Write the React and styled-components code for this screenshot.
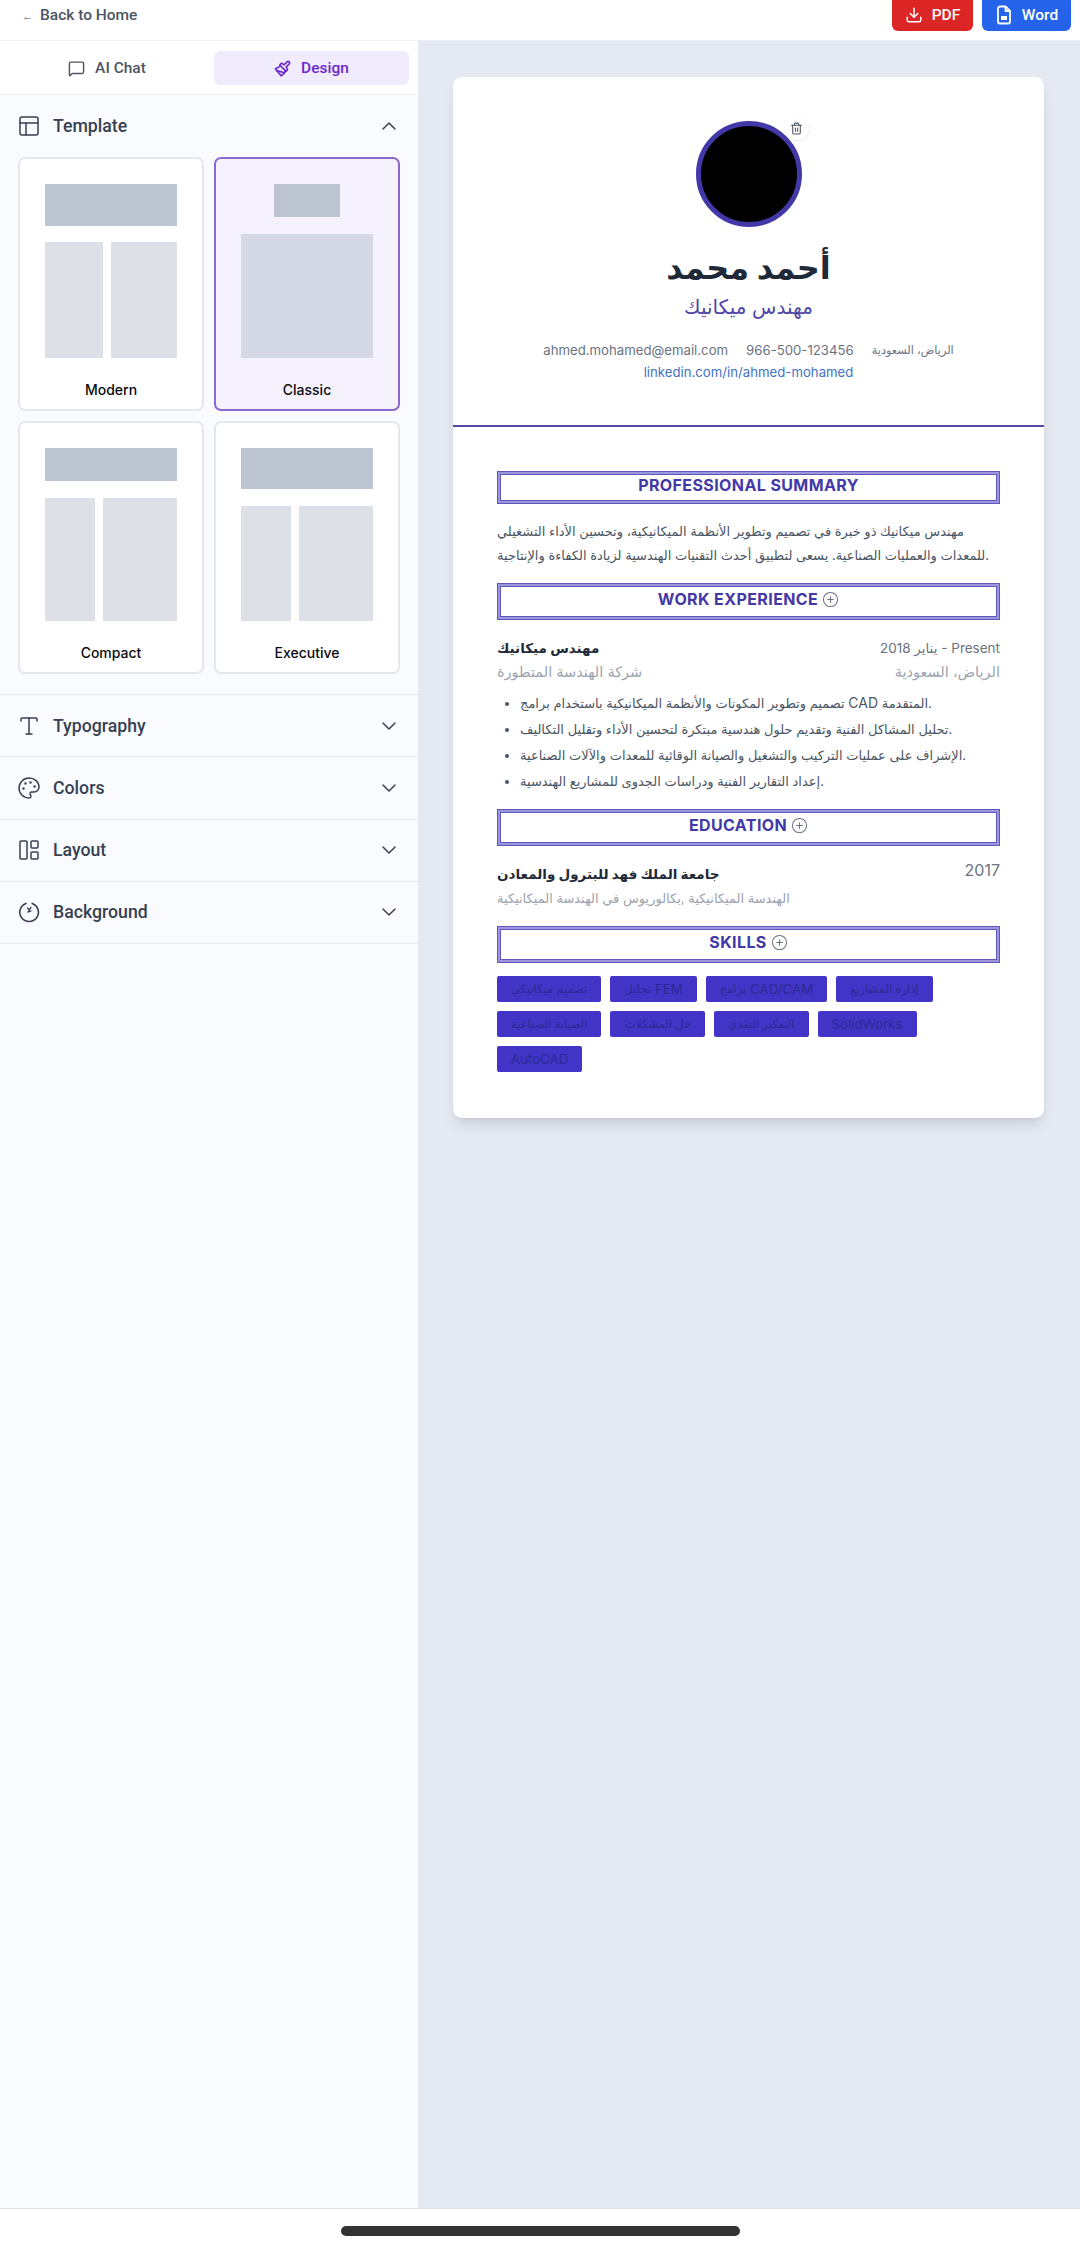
import React from "react";
import styled, { createGlobalStyle } from "styled-components";
import {
  ChevronDown,
  ChevronUp,
  CirclePlus,
  Download,
  LayoutPanelLeft,
  MessageSquare,
  Paintbrush,
  Palette,
  PanelsTopLeft,
  Trash2,
  Type,
} from "lucide-react";

const Global = createGlobalStyle`
  html, body { margin: 0; padding: 0; background: #fff; }
  * { box-sizing: border-box; }
  body { font-family: Inter, "DejaVu Sans", sans-serif; }
`;

const Page = styled.div`
  width: 1080px;
  height: 2252px;
  display: flex;
  flex-direction: column;
  overflow: hidden;
`;

const TopBar = styled.header`
  height: 41px;
  flex: none;
  display: flex;
  align-items: flex-end;
  justify-content: space-between;
  padding: 0 9px 9px 22px;
  background: #fff;
  border-bottom: 1px solid #eef0f4;
`;

const BackLink = styled.a`
  align-self: center;
  margin-bottom: 2px;
  font-family: Roboto, sans-serif;
  font-weight: 500;
  font-size: 15.5px;
  color: #4b5563;
  text-decoration: none;
  span { margin-right: 7px; font-size: 11px; }
`;

const Actions = styled.div`
  display: flex;
  gap: 9px;
`;

const ExportButton = styled.button`
  height: 40px;
  width: ${(p) => p.$width}px;
  display: flex;
  align-items: center;
  justify-content: center;
  gap: 9px;
  padding: 8px 0 0;
  border: 0;
  border-radius: 6px;
  background: ${(p) => p.$bg};
  color: #fff;
  font-family: Roboto, sans-serif;
  font-weight: 500;
  font-size: 15.5px;
  margin-top: -8px;
`;

const Main = styled.div`
  flex: 1;
  display: flex;
  min-height: 0;
  border-bottom: 1px solid #dfe2e6;
`;

const Sidebar = styled.aside`
  width: 418px;
  flex: none;
  background: #fafbfe;
`;

const Tabs = styled.div`
  height: 54px;
  display: grid;
  grid-template-columns: 196px 195px;
  gap: 9px;
  padding: 10px 9px 9px;
  background: #fff;
  border-bottom: 1px solid #eff1f5;
`;

const Tab = styled.button`
  display: flex;
  align-items: center;
  justify-content: center;
  gap: 10px;
  border: 0;
  border-radius: 6px;
  background: ${(p) => (p.$active ? "#f0ebfd" : "transparent")};
  color: ${(p) => (p.$active ? "#6d28c9" : "#4b5563")};
  font-family: Roboto, sans-serif;
  font-weight: 500;
  font-size: 15.5px;
`;

const SectionRow = styled.div`
  height: ${(p) => p.$height || 62}px;
  display: flex;
  align-items: center;
  padding: 0 17px;
  color: #374151;
  border-bottom: ${(p) => (p.$open ? "none" : "1px solid #e8eaef")};
`;

const RowLabel = styled.span`
  flex: 1;
  margin-left: 12px;
  font-family: Roboto, sans-serif;
  font-weight: 500;
  font-size: 17.7px;
`;

const TemplateBlock = styled.div`
  padding: 0 18px 20px;
  border-bottom: 1px solid #e8eaef;
`;

const TemplateGrid = styled.div`
  display: grid;
  grid-template-columns: 186px 186px;
  grid-auto-rows: auto;
  gap: 10px;
`;

const TemplateCard = styled.div`
  height: ${(p) => p.$height}px;
  display: flex;
  flex-direction: column;
  align-items: center;
  padding: 25px 25px 0;
  border: 2px solid ${(p) => (p.$active ? "#8b67cf" : "#e5e7eb")};
  border-radius: 7px;
  background: ${(p) => (p.$active ? "#f5f2fe" : "#fff")};
`;

const Thumb = styled.div`
  width: 132px;
  height: ${(p) => p.$height}px;
  display: flex;
  flex-direction: column;
  align-items: center;
  gap: ${(p) => p.$gap}px;
  flex: none;
`;

const ThumbHead = styled.div`
  width: ${(p) => p.$width || 132}px;
  height: ${(p) => p.$height}px;
  flex: none;
  background: #bdc5d2;
`;

const ThumbColumns = styled.div`
  width: 100%;
  flex: 1;
  display: grid;
  grid-template-columns: ${(p) => p.$left}px ${(p) => p.$right}px;
  gap: 8px;
`;

const ThumbColumn = styled.div`
  background: #dde1e7;
`;

const ThumbBody = styled.div`
  width: 132px;
  flex: 1;
  background: #d5d9e5;
`;

const CardLabel = styled.div`
  margin-top: auto;
  padding-bottom: 9px;
  color: #0b0b0f;
  font-family: Inter, sans-serif;
  font-weight: 500;
  font-size: 14px;
  line-height: 20px;
`;

const Preview = styled.main`
  flex: 1;
  padding: 36px 35px;
  background: #e5e9f2;
`;

const Paper = styled.div`
  width: 591px;
  background: #fff;
  border-radius: 9px;
  box-shadow: 0 10px 15px -3px rgba(0, 0, 0, 0.1), 0 4px 6px -4px rgba(0, 0, 0, 0.1);
`;

const PaperHead = styled.div`
  height: 350px;
  padding-top: 44px;
  display: flex;
  flex-direction: column;
  align-items: center;
  border-bottom: 2px solid #534aa3;
`;

const AvatarWrap = styled.div`
  position: relative;
  width: 106px;
  height: 106px;
  flex: none;
`;

const Avatar = styled.div`
  width: 100%;
  height: 100%;
  border-radius: 50%;
  background: #000;
  border: 5px solid #4338a8;
`;

const RemovePhoto = styled.button`
  position: absolute;
  top: -5px;
  right: -7px;
  width: 24px;
  height: 24px;
  display: flex;
  align-items: center;
  justify-content: center;
  padding: 0;
  border: 0;
  border-radius: 50%;
  background: #fff;
  color: #4b5563;
  box-shadow: 0 1px 3px rgba(0, 0, 0, 0.1);
`;

const Name = styled.h1`
  margin: 16px 0 0;
  font-size: 32px;
  line-height: 50px;
  font-weight: 700;
  color: #1f2937;
`;

const Role = styled.div`
  font-size: 20px;
  line-height: 28px;
  color: #4f46a8;
`;

const ContactRow = styled.div`
  margin-top: 18px;
  display: flex;
  gap: 18px;
  font-size: 13.2px;
  line-height: 22px;
  color: #6b7280;
`;

const ContactPlace = styled.span`
  font-size: 11.3px;
`;

const ContactLink = styled.a`
  font-size: 13.2px;
  line-height: 22px;
  color: #3f72c4;
  text-decoration: none;
`;

const PaperBody = styled.div`
  padding: 44px 44px 46px;
`;

const SectionBox = styled.div`
  margin-top: ${(p) => p.$top || 0}px;
  padding: 1px 0 6px;
  display: flex;
  align-items: center;
  justify-content: center;
  gap: 4px;
  border: 1px solid #5f57bd;
  box-shadow: inset 0 0 0 2px #9c97dc, inset 0 0 0 3px #5f57bd;
  color: #4338a8;
  font-weight: 700;
  font-size: 16px;
  line-height: ${(p) => (p.$tall ? 28 : 24)}px;
  letter-spacing: 0.4px;
`;

const PlusIcon = styled(CirclePlus)`
  color: #6b7280;
`;

const Summary = styled.p`
  margin: 15px 0 0;
  font-size: 13px;
  line-height: 24px;
  color: #4b5563;
`;

const EntryRow = styled.div`
  margin-top: ${(p) => p.$top || 0}px;
  display: flex;
  justify-content: space-between;
  align-items: flex-start;
`;

const EntryTitle = styled.div`
  padding-top: ${(p) => p.$pad || 0}px;
  font-size: 13.5px;
  font-weight: 700;
  line-height: 24px;
  color: #1f2937;
`;

const EntryMeta = styled.div`
  font-size: ${(p) => p.$size || 14}px;
  line-height: 24px;
  color: ${(p) => p.$color || "#6b7280"};
`;

const Bullets = styled.ul`
  margin: 6px 0 0;
  padding: 0 0 0 23px;
  font-size: 13px;
  line-height: 26px;
  color: #4b5563;
`;

const Latin = styled.span`
  font-size: ${(p) => p.$size}px;
`;

const Tags = styled.div`
  margin-top: 13px;
  display: flex;
  flex-wrap: wrap;
  gap: 9px;
`;

const SkillTag = styled.span`
  height: 26px;
  padding: 0 14px;
  display: flex;
  align-items: center;
  gap: 4px;
  border-radius: 2px;
  background: #4234c6;
  color: #2b2a95;
  font-size: 11.5px;
`;

const HomeBar = styled.div`
  height: 43px;
  flex: none;
  display: flex;
  justify-content: center;
  padding-top: 17px;
  background: #fff;
`;

const HomePill = styled.div`
  width: 399px;
  height: 10px;
  border-radius: 5px;
  background: #333;
`;

// small hand drawn icons that the packages don't have in this shape
const BackgroundIcon = () => (
  <svg width="24" height="24" viewBox="0 0 24 24" fill="none" stroke="currentColor" strokeWidth="1.6" strokeLinecap="round">
    <path d="M9 3.4a9.3 9.3 0 1 0 6.2 0" />
    <path d="M10.4 8l1.4 1.2M14 7.4l-3 4.8M12.4 11.6l1.6-.6" strokeWidth="1.3" />
  </svg>
);

const WordIcon = () => (
  <svg width="18" height="20" viewBox="0 0 18 20" fill="none" stroke="currentColor" strokeWidth="1.8" strokeLinejoin="round">
    <path d="M10.5 1.5H5a2 2 0 0 0-2 2v13a2 2 0 0 0 2 2h8a2 2 0 0 0 2-2V6z" />
    <path d="M10.5 1.5V6H15" />
    <rect x="6" y="11" width="6" height="4" fill="currentColor" stroke="none" />
  </svg>
);

const sections = [
  { label: "Typography", icon: <Type size={24} strokeWidth={1.5} /> },
  { label: "Colors", icon: <Palette size={24} strokeWidth={1.5} /> },
  { label: "Layout", icon: <LayoutPanelLeft size={24} strokeWidth={1.5} /> },
  { label: "Background", icon: <BackgroundIcon /> },
];

const duties = [
  <>
    تصميم وتطوير المكونات والأنظمة الميكانيكية باستخدام برامج <Latin $size={14}>CAD</Latin> المتقدمة.
  </>,
  "تحليل المشاكل الفنية وتقديم حلول هندسية مبتكرة لتحسين الأداء وتقليل التكاليف.",
  "الإشراف على عمليات التركيب والتشغيل والصيانة الوقائية للمعدات والآلات الصناعية.",
  "إعداد التقارير الفنية ودراسات الجدوى للمشاريع الهندسية.",
];

const skills = [
  "تصميم ميكانيكي",
  <>
    تحليل <Latin $size={13.3}>FEM</Latin>
  </>,
  <>
    برامج <Latin $size={13.3}>CAD/CAM</Latin>
  </>,
  "إدارة المشاريع",
  "الصيانة الصناعية",
  "حل المشكلات",
  "التفكير النقدي",
  <Latin $size={13.3}>SolidWorks</Latin>,
  <Latin $size={13.3}>AutoCAD</Latin>,
];

export default function App() {
  return (
    <Page>
      <Global />
      <TopBar>
        <BackLink href="#">
          <span>←</span>Back to Home
        </BackLink>
        <Actions>
          <ExportButton $bg="#dc2626" $width={81}>
            <Download size={18} />
            PDF
          </ExportButton>
          <ExportButton $bg="#2563eb" $width={89}>
            <WordIcon />
            Word
          </ExportButton>
        </Actions>
      </TopBar>
      <Main>
        <Sidebar>
          <Tabs>
            <Tab>
              <MessageSquare size={17} />
              AI Chat
            </Tab>
            <Tab $active>
              <Paintbrush size={17} strokeWidth={2.3} />
              Design
            </Tab>
          </Tabs>
          <SectionRow $open $height={62}>
            <PanelsTopLeft size={24} strokeWidth={1.5} />
            <RowLabel>Template</RowLabel>
            <ChevronUp size={24} strokeWidth={1.5} />
          </SectionRow>
          <TemplateBlock>
            <TemplateGrid>
              <TemplateCard $height={254}>
                <Thumb $height={174} $gap={16}>
                  <ThumbHead $height={42} />
                  <ThumbColumns $left={58} $right={66}>
                    <ThumbColumn />
                    <ThumbColumn />
                  </ThumbColumns>
                </Thumb>
                <CardLabel>Modern</CardLabel>
              </TemplateCard>
              <TemplateCard $height={254} $active>
                <Thumb $height={174} $gap={17}>
                  <ThumbHead $width={66} $height={33} />
                  <ThumbBody />
                </Thumb>
                <CardLabel>Classic</CardLabel>
              </TemplateCard>
              <TemplateCard $height={253}>
                <Thumb $height={173} $gap={17}>
                  <ThumbHead $height={33} />
                  <ThumbColumns $left={50} $right={74}>
                    <ThumbColumn />
                    <ThumbColumn />
                  </ThumbColumns>
                </Thumb>
                <CardLabel>Compact</CardLabel>
              </TemplateCard>
              <TemplateCard $height={253}>
                <Thumb $height={173} $gap={17}>
                  <ThumbHead $height={41} />
                  <ThumbColumns $left={50} $right={74}>
                    <ThumbColumn />
                    <ThumbColumn />
                  </ThumbColumns>
                </Thumb>
                <CardLabel>Executive</CardLabel>
              </TemplateCard>
            </TemplateGrid>
          </TemplateBlock>
          {sections.map((s) => (
            <SectionRow key={s.label} $height={62.25}>
              {s.icon}
              <RowLabel>{s.label}</RowLabel>
              <ChevronDown size={24} strokeWidth={1.5} />
            </SectionRow>
          ))}
        </Sidebar>
        <Preview>
          <Paper>
            <PaperHead>
              <AvatarWrap>
                <Avatar />
                <RemovePhoto>
                  <Trash2 size={13} />
                </RemovePhoto>
              </AvatarWrap>
              <Name>أحمد محمد</Name>
              <Role>مهندس ميكانيك</Role>
              <ContactRow>
                <span>ahmed.mohamed@email.com</span>
                <span>966-500-123456</span>
                <ContactPlace>الرياض، السعودية</ContactPlace>
              </ContactRow>
              <ContactLink href="#">linkedin.com/in/ahmed-mohamed</ContactLink>
            </PaperHead>
            <PaperBody>
              <SectionBox>PROFESSIONAL SUMMARY</SectionBox>
              <Summary>
                مهندس ميكانيك ذو خبرة في تصميم وتطوير الأنظمة الميكانيكية، وتحسين الأداء التشغيلي للمعدات والعمليات الصناعية. يسعى لتطبيق أحدث التقنيات الهندسية لزيادة الكفاءة والإنتاجية.
              </Summary>
              <SectionBox $tall $top={16}>
                WORK EXPERIENCE <PlusIcon size={17} strokeWidth={1.5} />
              </SectionBox>
              <EntryRow $top={16}>
                <EntryTitle>مهندس ميكانيك</EntryTitle>
                <EntryMeta $size={13.5}>يناير 2018 - Present</EntryMeta>
              </EntryRow>
              <EntryRow>
                <EntryMeta $size={14.5} $color="#9ca3af">شركة الهندسة المتطورة</EntryMeta>
                <EntryMeta $size={14.5} $color="#9ca3af">الرياض، السعودية</EntryMeta>
              </EntryRow>
              <Bullets>
                {duties.map((d, i) => (
                  <li key={i}>{d}</li>
                ))}
              </Bullets>
              <SectionBox $tall $top={15}>
                EDUCATION <PlusIcon size={17} strokeWidth={1.5} />
              </SectionBox>
              <EntryRow $top={12}>
                <EntryTitle $pad={4}>جامعة الملك فهد للبترول والمعادن</EntryTitle>
                <EntryMeta $size={16}>2017</EntryMeta>
              </EntryRow>
              <EntryMeta $size={13} $color="#9ca3af">الهندسة الميكانيكية ,بكالوريوس في الهندسة الميكانيكية</EntryMeta>
              <SectionBox $tall $top={16}>
                SKILLS <PlusIcon size={17} strokeWidth={1.5} />
              </SectionBox>
              <Tags>
                {skills.map((s, i) => (
                  <SkillTag key={i}>{s}</SkillTag>
                ))}
              </Tags>
            </PaperBody>
          </Paper>
        </Preview>
      </Main>
      <HomeBar>
        <HomePill />
      </HomeBar>
    </Page>
  );
}
